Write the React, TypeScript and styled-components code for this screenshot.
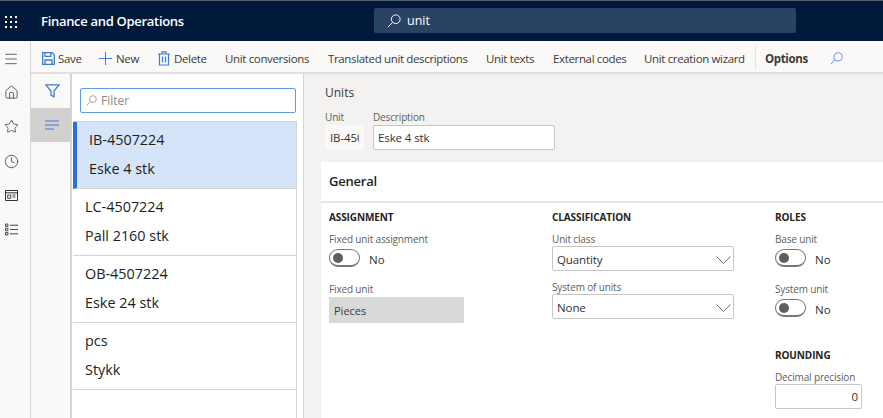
import React from "react";
import styled, { createGlobalStyle } from "styled-components";
import { Clock, Home, Menu, Star } from "lucide-react";

const GlobalStyle = createGlobalStyle`
  html, body { margin: 0; padding: 0; background: #fff; }
  * { box-sizing: border-box; }
  body { font-family: "Open Sans", "Noto Sans", Arial, sans-serif; color: #323130; }
`;

const Page = styled.div`
  width: 883px;
  height: 418px;
  overflow: hidden;
  display: flex;
  flex-direction: column;
  font-size: 12px;
`;

// Top bar
const Header = styled.header`
  flex: 0 0 41px;
  display: flex;
  align-items: center;
  background: #00183a;
  border-top: 1px solid #55606f;
  color: #fff;
  padding-left: 5px;
`;

const Waffle = styled.div`
  width: 13px;
  margin-top: 1px;
  display: grid;
  grid-template-columns: repeat(3, 2px);
  gap: 3px;
  i { width: 2px; height: 2px; background: #fff; }
`;

const Title = styled.div`
  width: 333px;
  margin-left: 23px;
  font-size: 13px;
  letter-spacing: -0.3px;
  font-weight: 600;
  white-space: nowrap;
`;

const SearchBox = styled.div`
  width: 422px;
  height: 25px;
  margin-top: -2px;
  display: flex;
  align-items: center;
  gap: 6px;
  padding: 1px 0 0 13px;
  background: #2a4365;
  border-radius: 2px;
  font-size: 12.5px;
`;

const Body = styled.div`
  flex: 1;
  display: flex;
  min-height: 0;
`;

// Left navigation
const NavRail = styled.nav`
  flex: 0 0 31px;
  display: grid;
  grid-auto-rows: 34.2px;
  align-content: start;
  justify-items: center;
  align-items: center;
  padding: 0.5px 8px 0 0;
  background: #faf9f8;
  border-right: 1px solid #d4d4d4;
  color: #323130;
`;

const Main = styled.div`
  flex: 1;
  display: flex;
  flex-direction: column;
  min-width: 0;
`;

// Action bar
const ActionBar = styled.div`
  flex: 0 0 33px;
  display: flex;
  align-items: center;
  padding: 3px 0 0 11px;
  background: #faf9f8;
  border-bottom: 2px solid #e0dfde;
  white-space: nowrap;
`;

const Action = styled.div<{ $width: number; $bold?: boolean; $gap?: number }>`
  flex: 0 0 ${(p) => p.$width}px;
  display: flex;
  align-items: center;
  gap: ${(p) => p.$gap ?? 4}px;
  font-size: 11.5px;
  letter-spacing: -0.35px;
  font-weight: ${(p) => (p.$bold ? 700 : 400)};
  color: #3b3a39;
`;

const BarDivider = styled.div`
  flex: 0 0 1px;
  height: 24px;
  margin: -3px 9px 0 0;
  background: #e3e2e1;
`;

const Workspace = styled.div`
  flex: 1;
  display: flex;
  min-height: 0;
`;

// Filter rail
const FilterRail = styled.div`
  flex: 0 0 41px;
  display: flex;
  flex-direction: column;
  background: #faf9f8;
  border-right: 2px solid #d4d4d4;
`;

const RailButton = styled.div<{ $active?: boolean }>`
  height: 34px;
  display: flex;
  align-items: center;
  justify-content: center;
  padding-left: 3px;
  background: ${(p) => (p.$active ? "#d2d0ce" : "transparent")};
`;

// List of units
const ListPane = styled.div`
  flex: 0 0 232px;
  background: #fff;
  border-right: 1px solid #d4d4d4;
  padding: 14px 0 0 1px;
`;

const FilterField = styled.div`
  width: 216px;
  height: 25px;
  margin-left: 7px;
  display: flex;
  align-items: center;
  gap: 4px;
  padding-left: 5px;
  border: 1px solid #5f9ae8;
  border-radius: 2px;
  color: #8a8886;
  font-size: 12px;
`;

const UnitList = styled.div`
  width: 224px;
  height: 300px;
  margin-top: 8px;
  border-top: 1px solid #d4d4d4;
  border-right: 1px solid #d4d4d4;
`;

const UnitRow = styled.div<{ $selected?: boolean }>`
  height: 67px;
  padding: 3px 0 0 12px;
  background: ${(p) => (p.$selected ? "#d6e4f9" : "#fff")};
  border-left: ${(p) => (p.$selected ? "4px solid #2b6fdc" : "none")};
  border-bottom: 1px solid #d4d4d4;
  font-size: 14.4px;
  font-weight: 500;
  color: #201f1e;
  div { height: 29px; line-height: 29px; white-space: nowrap; }
`;

// Details
const Details = styled.div`
  flex: 1;
  min-width: 0;
  background: #f3f2f1;
  padding: 11px 0 0 17px;
  display: flex;
  flex-direction: column;
`;

const FormHead = styled.div`
  padding-left: 4px;
`;

const Caption = styled.div`
  font-size: 12px;
  line-height: 16px;
  color: #3b3a39;
`;

const HeadFields = styled.div`
  display: flex;
  gap: 9px;
  margin-top: 9px;
`;

const FieldLabel = styled.div`
  font-size: 10px;
  line-height: 14px;
  letter-spacing: -0.15px;
  font-weight: 500;
  color: #605e5c;
  white-space: nowrap;
`;

const HeadInput = styled.div<{ $width: number; $plain?: boolean }>`
  width: ${(p) => p.$width}px;
  height: 25px;
  margin-top: 1px;
  padding: 0 4px;
  line-height: 23px;
  font-size: 11.5px;
  letter-spacing: -0.1px;
  overflow: clip;
  overflow-clip-margin: content-box;
  white-space: nowrap;
  background: ${(p) => (p.$plain ? "#faf9f8" : "#fff")};
  border: 1px solid ${(p) => (p.$plain ? "#faf9f8" : "#c8c6c4")};
  border-radius: 2px;
`;

const Card = styled.section`
  flex: 1;
  margin-top: 12px;
  background: #fff;
  min-height: 0;
`;

const CardTitle = styled.div`
  height: 41px;
  padding: 9px 0 0 8px;
  font-size: 13px;
  font-weight: 600;
  letter-spacing: -0.2px;
  line-height: 20px;
  color: #201f1e;
  border-bottom: 2px solid #e5e5e5;
`;

const Columns = styled.div`
  display: grid;
  grid-template-columns: 223px 223px 1fr;
  padding: 7px 0 0 8px;
`;

const Column = styled.div`
  display: flex;
  flex-direction: column;
`;

const GroupTitle = styled.div<{ $gap?: number }>`
  margin-top: ${(p) => p.$gap ?? 0}px;
  font-size: 10px;
  line-height: 14px;
  font-weight: 700;
  color: #252423;
  letter-spacing: -0.1px;
  margin-bottom: 8px;
`;

const ToggleRow = styled.div`
  display: flex;
  align-items: center;
  gap: 9px;
  height: 20px;
  margin: 2px 0 14px;
  font-size: 11.5px;
`;

const Toggle = styled.div`
  width: 31px;
  height: 18px;
  padding: 3px;
  border: 1px solid #77767a;
  border-radius: 9px;
  border-bottom-width: 2px;
  i { display: block; width: 10px; height: 10px; border-radius: 50%; background: #605e5c; }
`;

const ToggleText = styled.span`
  padding-top: 3px;
`;

const ReadOnly = styled.div`
  width: 135px;
  height: 26px;
  margin-top: 1px;
  padding-left: 5px;
  line-height: 27px;
  font-size: 11px;
  background: #d9d9d9;
  border-radius: 1px;
  color: #3b3a39;
`;

const SelectBox = styled.div<{ $gap: number }>`
  width: 182px;
  height: 25px;
  margin-bottom: ${(p) => p.$gap}px;
  display: flex;
  align-items: center;
  justify-content: space-between;
  padding: 2px 2px 0 4px;
  font-size: 11.5px;
  letter-spacing: -0.1px;
  border: 1px solid #c8c6c4;
  border-radius: 2px;
  color: #323130;
`;

const NumberBox = styled.div`
  width: 87px;
  height: 25px;
  padding-right: 3px;
  text-align: right;
  line-height: 24px;
  font-size: 11.5px;
  border: 1px solid #c8c6c4;
  border-radius: 2px;
`;

const Magnifier: React.FC<{ size: number; color: string; weight?: number }> = ({ size, color, weight = 1.1 }) => (
  <svg width={size} height={size} viewBox="0 0 16 16" fill="none" stroke={color} strokeWidth={weight}>
    <circle cx="10" cy="6" r="5" />
    <path d="M6.4 9.6L1 15" />
  </svg>
);

const SaveIcon = () => (
  <svg width="13" height="13" viewBox="0 0 13 13" fill="none" stroke="#3f7ad6" strokeWidth="1.3">
    <path d="M.7.7h9.5l2.1 2.1v9.5H.7z" />
    <path d="M3 .7v3.6h5.8V.7M3 12.3V8h7v4.3" />
  </svg>
);

const PlusIcon = () => (
  <svg width="13" height="13" viewBox="0 0 13 13" fill="none" stroke="#3f7ad6" strokeWidth="1">
    <path d="M6.5 0v13M0 6.5h13" />
  </svg>
);

const TrashIcon = () => (
  <svg width="12" height="15" viewBox="0 0 12 15" fill="none" stroke="#3f7ad6" strokeWidth="1.2">
    <path d="M0 3h12M4 3V.8h4V3M1.5 3v11h9V3M4.5 5.5v6M7.5 5.5v6" />
  </svg>
);

const FunnelIcon = () => (
  <svg width="15" height="14" viewBox="0 0 15 14" fill="none" stroke="#3c78d8" strokeWidth="1.3">
    <path d="M.8.8h13.4L9 7v5.8L6 11.2V7z" />
  </svg>
);

const WorkspaceIcon = () => (
  <svg width="13" height="11" viewBox="0 0 13 11" fill="none" stroke="#323130">
    <path d="M.5.5h12v10H.5zM.5 2.8h12" />
    <path d="M2.7 5h3v3.3h-3zM7.5 5h3M7.5 7h3" strokeWidth=".9" />
  </svg>
);

const ModulesIcon = () => (
  <svg width="13" height="13" viewBox="0 0 13 13" fill="none" stroke="#323130">
    <path d="M.5 1h2.4v2.4H.5zM.5 5.3h2.4v2.4H.5zM.5 9.6h2.4V12H.5zM5 2.2h8M5 6.5h8M5 10.8h8" strokeWidth=".9" />
  </svg>
);

const ListLinesIcon = () => (
  <svg width="14" height="10" viewBox="0 0 14 10" fill="none" stroke="#3f7ad6" strokeWidth="1.1">
    <path d="M0 1h14M0 5h14M0 9h9" />
  </svg>
);

const ChevronIcon = () => (
  <svg width="15" height="8" viewBox="0 0 15 8" fill="none" stroke="#605e5c" strokeWidth="0.9">
    <path d="M.5.5l7 7 7-7" />
  </svg>
);

const units = [
  { code: "IB-4507224", name: "Eske 4 stk", selected: true },
  { code: "LC-4507224", name: "Pall 2160 stk" },
  { code: "OB-4507224", name: "Eske 24 stk" },
  { code: "pcs", name: "Stykk" },
];

const Switch = () => (
  <ToggleRow>
    <Toggle>
      <i />
    </Toggle>
    <ToggleText>No</ToggleText>
  </ToggleRow>
);

const App: React.FC = () => {
  return (
    <Page>
      <GlobalStyle />
      <Header>
        <Waffle>
          {Array.from({ length: 9 }).map((_, i) => (
            <i key={i} />
          ))}
        </Waffle>
        <Title>Finance and Operations</Title>
        <SearchBox>
          <Magnifier size={14} color="#ffffff" />
          unit
        </SearchBox>
      </Header>
      <Body>
        <NavRail>
          <Menu size={16} strokeWidth={1.1} />
          <Home size={15} strokeWidth={1.2} />
          <Star size={15} strokeWidth={1.2} />
          <Clock size={15} strokeWidth={1.2} />
          <WorkspaceIcon />
          <ModulesIcon />
        </NavRail>
        <Main>
          <ActionBar>
            <Action $width={57} $gap={3}>
              <SaveIcon />
              Save
            </Action>
            <Action $width={59}>
              <PlusIcon />
              New
            </Action>
            <Action $width={67}>
              <TrashIcon />
              Delete
            </Action>
            <Action $width={103}>Unit conversions</Action>
            <Action $width={158}>Translated unit descriptions</Action>
            <Action $width={67}>Unit texts</Action>
            <Action $width={91}>External codes</Action>
            <Action $width={111}>Unit creation wizard</Action>
            <BarDivider />
            <Action $width={65} $bold>
              Options
            </Action>
            <Magnifier size={13} color="#4f86e6" />
          </ActionBar>
          <Workspace>
            <FilterRail>
              <RailButton>
                <FunnelIcon />
              </RailButton>
              <RailButton $active>
                <ListLinesIcon />
              </RailButton>
            </FilterRail>
            <ListPane>
              <FilterField>
                <Magnifier size={11} color="#8a8886" />
                Filter
              </FilterField>
              <UnitList>
                {units.map((u) => (
                  <UnitRow key={u.code} $selected={u.selected}>
                    <div>{u.code}</div>
                    <div>{u.name}</div>
                  </UnitRow>
                ))}
              </UnitList>
            </ListPane>
            <Details>
              <FormHead>
                <Caption>Units</Caption>
                <HeadFields>
                  <div>
                    <FieldLabel>Unit</FieldLabel>
                    <HeadInput $width={39} $plain>
                      IB-450
                    </HeadInput>
                  </div>
                  <div>
                    <FieldLabel>Description</FieldLabel>
                    <HeadInput $width={182}>Eske 4 stk</HeadInput>
                  </div>
                </HeadFields>
              </FormHead>
              <Card>
                <CardTitle>General</CardTitle>
                <Columns>
                  <Column>
                    <GroupTitle>ASSIGNMENT</GroupTitle>
                    <FieldLabel>Fixed unit assignment</FieldLabel>
                    <Switch />
                    <FieldLabel>Fixed unit</FieldLabel>
                    <ReadOnly>Pieces</ReadOnly>
                  </Column>
                  <Column>
                    <GroupTitle>CLASSIFICATION</GroupTitle>
                    <FieldLabel>Unit class</FieldLabel>
                    <SelectBox $gap={9}>
                      Quantity
                      <ChevronIcon />
                    </SelectBox>
                    <FieldLabel>System of units</FieldLabel>
                    <SelectBox $gap={0}>
                      None
                      <ChevronIcon />
                    </SelectBox>
                  </Column>
                  <Column>
                    <GroupTitle>ROLES</GroupTitle>
                    <FieldLabel>Base unit</FieldLabel>
                    <Switch />
                    <FieldLabel>System unit</FieldLabel>
                    <Switch />
                    <GroupTitle $gap={16}>ROUNDING</GroupTitle>
                    <FieldLabel>Decimal precision</FieldLabel>
                    <NumberBox>0</NumberBox>
                  </Column>
                </Columns>
              </Card>
            </Details>
          </Workspace>
        </Main>
      </Body>
    </Page>
  );
};

export default App;
